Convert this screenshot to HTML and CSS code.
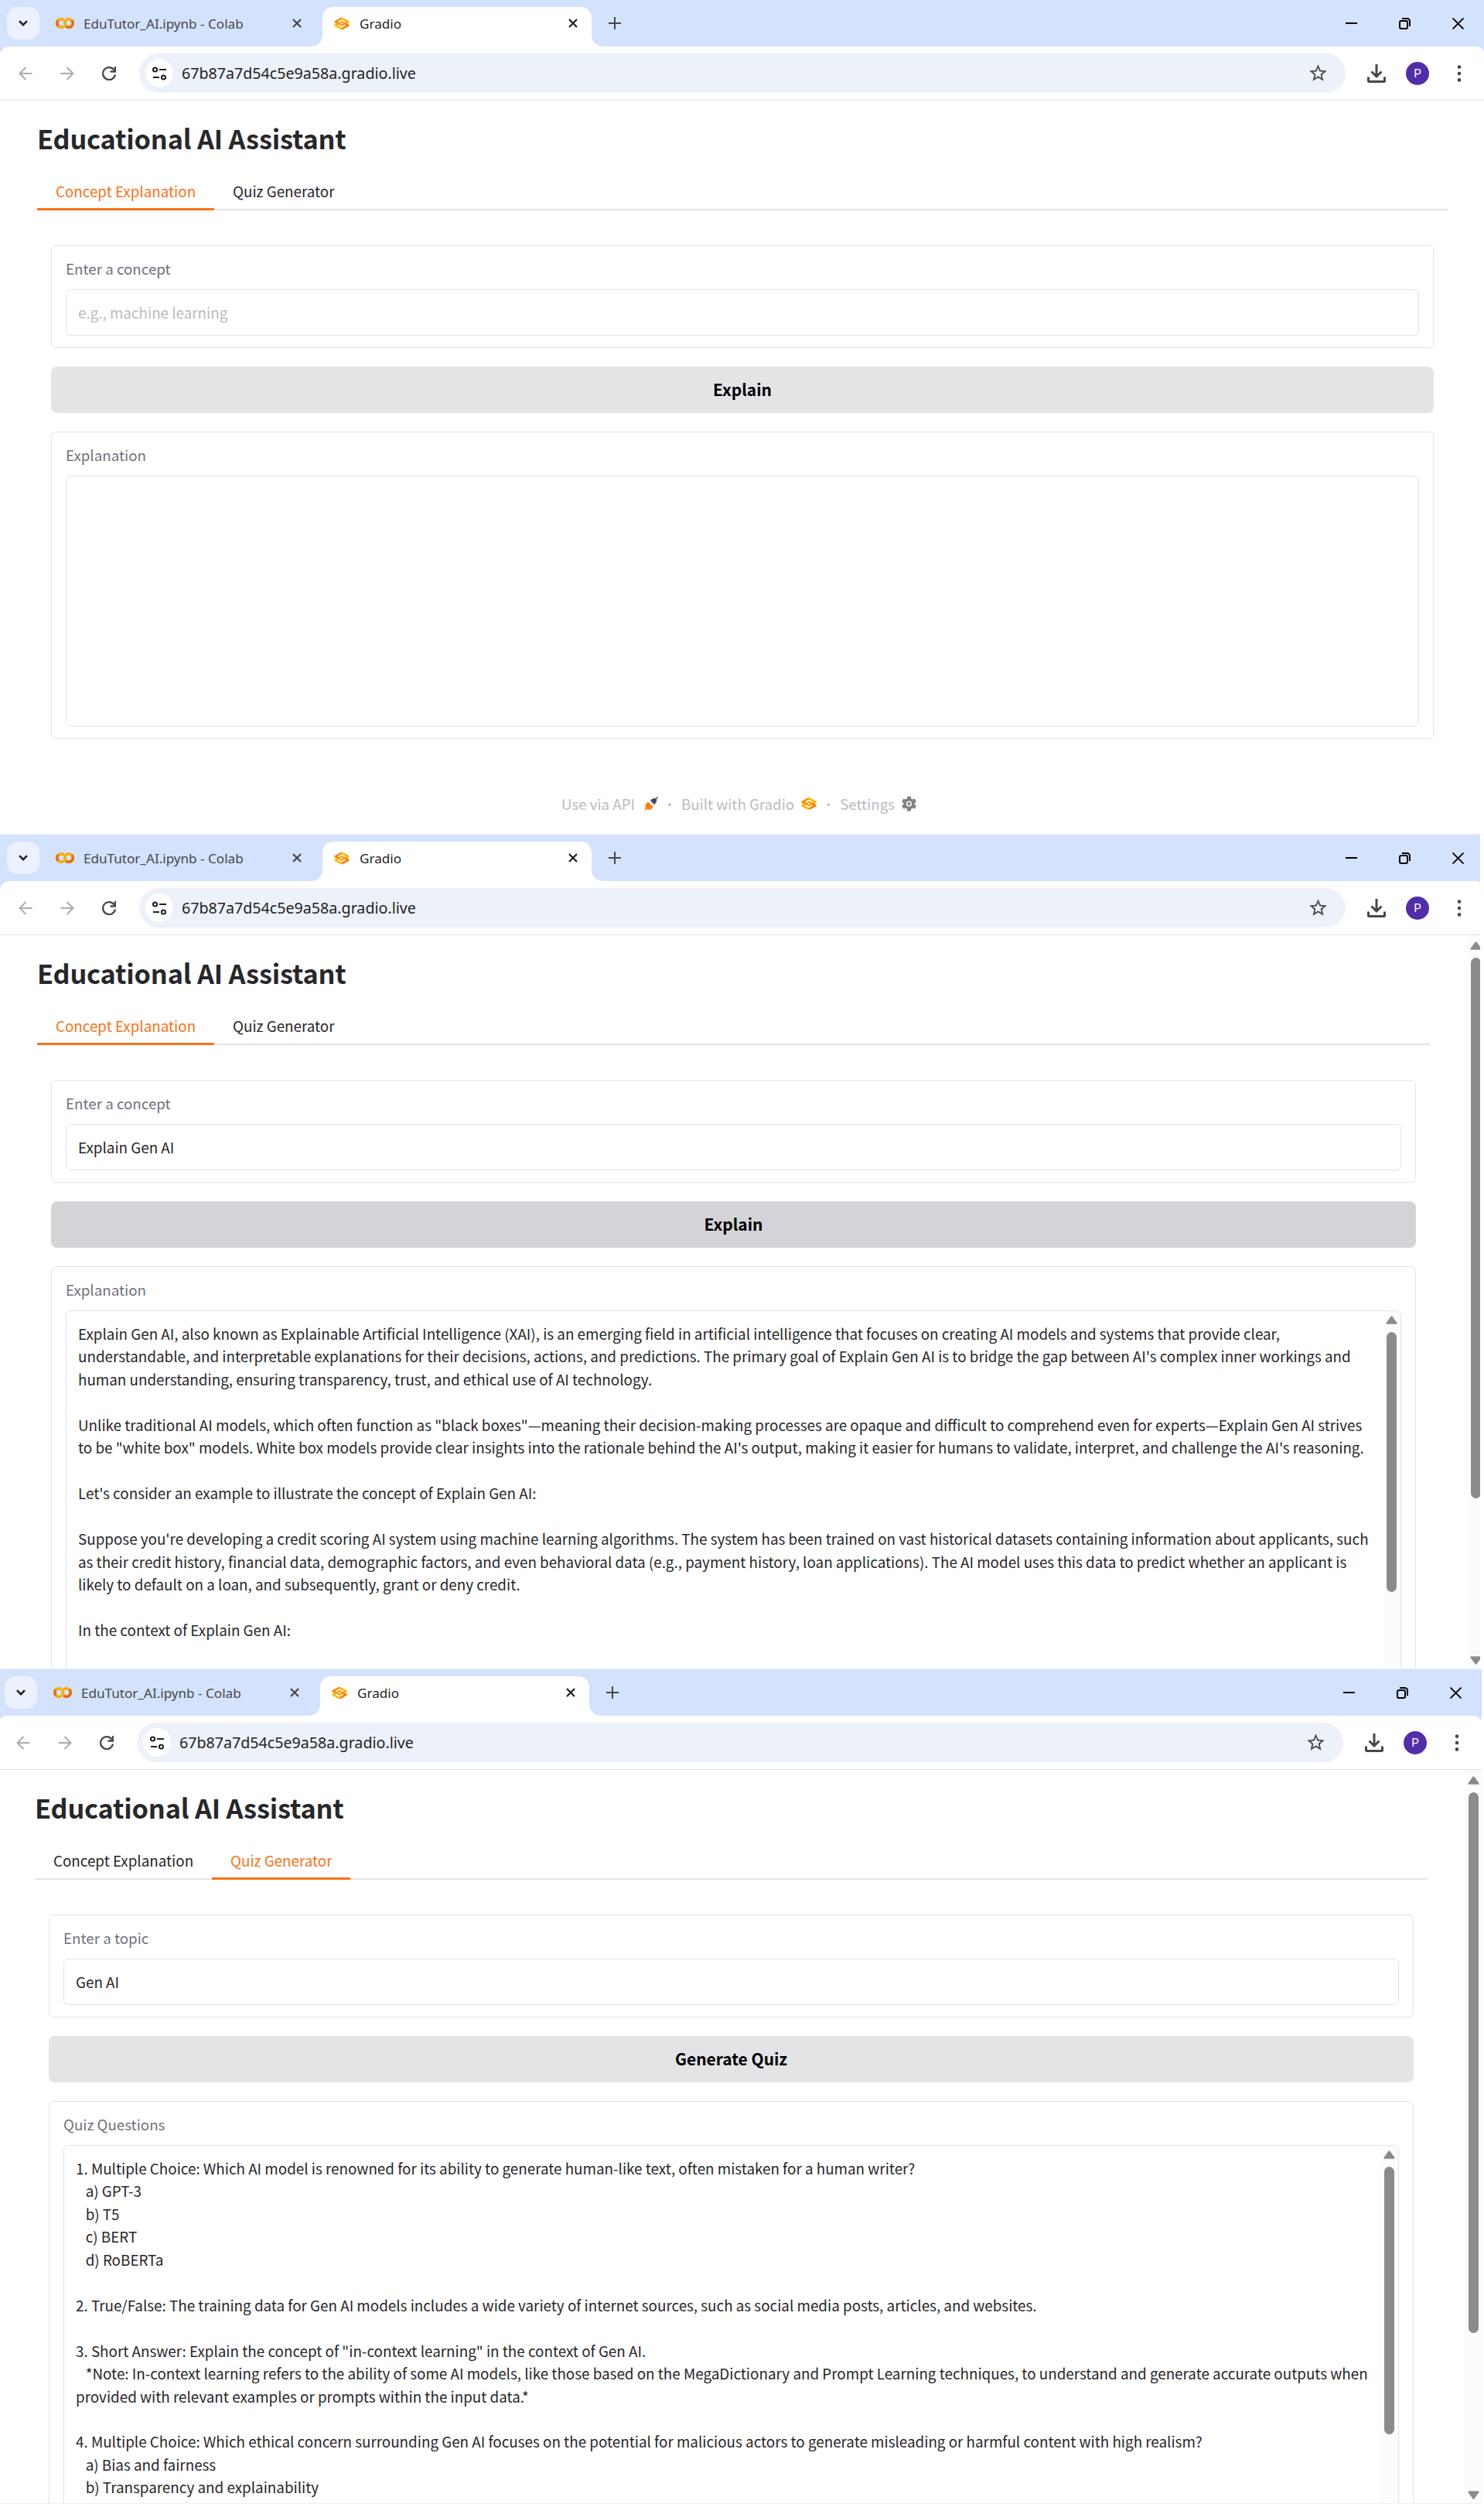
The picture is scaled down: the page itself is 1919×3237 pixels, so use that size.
FILE: index.html
```html
<!DOCTYPE html>
<html lang="en">
<head>
<meta charset="utf-8">
<title>Educational AI Assistant</title>
<link rel="stylesheet" href="styles.css">
</head>
<body>
<svg class="sprite" aria-hidden="true">
  <symbol id="chevron" viewBox="0 0 12 8"><path d="M1 1.2l5 5 5-5" fill="none" stroke="#1f1f1f" stroke-width="2.4"/></symbol>
  <symbol id="colab" viewBox="0 0 24 14">
    <path d="M10.6 3.300A5.200 5.200 0 1 0 10.6 10.700" fill="none" stroke="#f9ab00" stroke-width="3.600"/>
    <path d="M3.400 3.300A5.200 5.200 0 0 0 3.400 10.700" fill="none" stroke="#e8710a" stroke-width="3.600"/>
    <circle cx="17" cy="7" r="5.200" fill="none" stroke="#f9ab00" stroke-width="3.600"/>
    <path d="M20.700 3.300A5.200 5.200 0 0 1 13.300 10.700" fill="none" stroke="#e8710a" stroke-width="3.600"/>
  </symbol>
  <symbol id="gradio" viewBox="0 0 20 17">
    <path d="M6.500 9L1.700 6.200 10 1.600" fill="none" stroke="#ff8a00" stroke-width="2.800" stroke-linejoin="round"/>
    <path d="M10 1.600L18.300 6.200 15.500 7.700" fill="none" stroke="#ffb800" stroke-width="2.800" stroke-linejoin="round"/>
    <path d="M13.500 8L18.300 10.800 10 15.400" fill="none" stroke="#ff7c00" stroke-width="2.800" stroke-linejoin="round"/>
    <path d="M10 15.400L1.700 10.800 4.500 9.300" fill="none" stroke="#ffb800" stroke-width="2.800" stroke-linejoin="round"/>
    <path d="M10 6.100L13.700 8.500 10 10.900 6.300 8.500z" fill="none" stroke="#ff9d00" stroke-width="2.200" stroke-linejoin="round"/>
  </symbol>
  <symbol id="cross" viewBox="0 0 12 12"><path d="M1 1l10 10M11 1L1 11" fill="none" stroke="currentColor" stroke-width="2.2"/></symbol>
  <symbol id="plus" viewBox="0 0 16 16"><path d="M8 0v16M0 8h16" fill="none" stroke="#474747" stroke-width="2"/></symbol>
  <symbol id="minimize" viewBox="0 0 15 15"><path d="M0 7h15" stroke="#000" stroke-width="2"/></symbol>
  <symbol id="restore" viewBox="0 0 15 15"><rect x="1" y="4" width="10" height="10" rx="2" fill="none" stroke="#000" stroke-width="2"/><path d="M4 1h6.500A3.500 3.500 0 0 1 14 4.500V11" fill="none" stroke="#000" stroke-width="2"/></symbol>
  <symbol id="close" viewBox="0 0 15 15"><path d="M.5.5l14 14M14.500.5l-14 14" fill="none" stroke="#000" stroke-width="1.800"/></symbol>
  <symbol id="back" viewBox="0 0 18 18"><path d="M17.500 9H2M9.500 1L1.500 9l8 8" fill="none" stroke="#ababab" stroke-width="2"/></symbol>
  <symbol id="forward" viewBox="0 0 18 18"><path d="M.5 9H16M8.500 1l8 8-8 8" fill="none" stroke="#ababab" stroke-width="2"/></symbol>
  <symbol id="reload" viewBox="0 0 18 18"><path d="M15.800 4.700A8 8 0 1 0 17 10.500M17 0v6.500h-6.500" fill="none" stroke="#474747" stroke-width="2.300"/></symbol>
  <symbol id="tune" viewBox="0 0 18 18"><g fill="none" stroke="#1f1f1f" stroke-width="2"><circle cx="3.500" cy="4" r="2.600"/><path d="M9 4h9"/><circle cx="14.500" cy="14" r="2.600"/><path d="M1 14h8"/></g></symbol>
  <symbol id="star" viewBox="0 0 24 24"><path fill="#474747" d="M22 9.240l-7.190-.62L12 2 9.190 8.630 2 9.240l5.460 4.730L5.820 21 12 17.270 18.180 21l-1.630-7.030L22 9.240zM12 15.400l-3.760 2.270 1-4.280-3.320-2.880 4.380-.38L12 6.100l1.710 4.040 4.380.38-3.320 2.880 1 4.280L12 15.400z"/></symbol>
  <symbol id="download" viewBox="0 0 24 24"><path d="M12 0v15M5.500 9.500L12 16l6.500-6.500" fill="none" stroke="#474747" stroke-width="3"/><path d="M1.500 16.500v5.200q0 .8.800.8h19.400q.8 0 .8-.8v-5.200" fill="none" stroke="#474747" stroke-width="3"/></symbol>
  <symbol id="dots" viewBox="0 0 6 22"><g fill="#474747"><circle cx="3" cy="2.600" r="2.300"/><circle cx="3" cy="11" r="2.300"/><circle cx="3" cy="19.400" r="2.300"/></g></symbol>
  <symbol id="arrow-up" viewBox="0 0 15 11"><path d="M7.500 1.300l6 8.400H1.500z" fill="#8b8b8b" stroke="#8b8b8b" stroke-width="2.200" stroke-linejoin="round"/></symbol>
  <symbol id="arrow-down" viewBox="0 0 15 11"><path d="M7.500 9.700l6-8.400H1.500z" fill="#8b8b8b" stroke="#8b8b8b" stroke-width="2.200" stroke-linejoin="round"/></symbol>
  <symbol id="plug" viewBox="0 0 18 18">
    <path d="M.8 17.200l2.500-2.500" stroke="#ff7c00" stroke-width="1.800"/>
    <path d="M3 8.200l2.200-1.400.7 1.500 1.800-1.300-.3 2.500 1.900 1.800 2.300-.4-1.200 1.900 1.100.7-2 2.200q-3.500 2.200-6.500-.2Q.3 12 3 8.200z" fill="#ff7c00"/>
    <path d="M8.300 4.300l2.600-1.900q2.600-1.600 4.400.2 1.700 1.800.3 4.300l-2.100 2.900q-.5.500-1 0L8.300 5.300q-.5-.5 0-1z" fill="#3f4a63"/>
    <path d="M14.800 3.200L17.600.4" stroke="#3f4a63" stroke-width="1.500"/>
  </symbol>
  <symbol id="gear" viewBox="0 0 24 24"><path fill="#808080" fill-rule="evenodd" d="M19.800 12.900c.1-.3.1-.6.100-.9s0-.6-.1-.9l2.700-2c.3-.2.300-.5.200-.8l-2.500-4.300c-.2-.3-.5-.4-.8-.3l-3 1.200c-.6-.4-1.200-.8-1.900-1.100L14 .6c0-.3-.3-.6-.6-.6h-4.800c-.3 0-.6.3-.6.6l-.5 3.200c-.7.3-1.300.7-1.900 1.100l-3-1.200c-.3-.1-.6 0-.8.3L-.7 8.300c-.1.300-.1.600.2.800l2.700 2c-.1.300-.1.600-.1.900s0 .6.1.9l-2.700 2c-.3.200-.3.500-.2.800l2.500 4.300c.2.300.5.400.8.300l3-1.200c.6.400 1.200.8 1.900 1.100l.5 3.200c0 .3.300.6.600.6h4.800c.3 0 .6-.3.600-.6l.5-3.200c.7-.3 1.300-.7 1.900-1.100l3 1.200c.3.100.6 0 .8-.3l2.500-4.300c.1-.3.100-.6-.2-.8zM11 7.500a4.500 4.500 0 1 1 0 9 4.500 4.500 0 0 1 0-9zm0 1.900a2.600 2.600 0 1 0 0 5.200 2.600 2.600 0 0 0 0-5.200z" transform="translate(1)"/></symbol>
</svg>

<section class="window">
  <div class="frame">
    <header class="tabstrip">
      <button class="tab-search"><svg class="i-chevron"><use href="#chevron"/></svg></button>
      <div class="btab"><svg class="i-colab"><use href="#colab"/></svg><span class="btab-title">EduTutor_AI.ipynb - Colab</span><svg class="i-cross"><use href="#cross"/></svg></div>
      <div class="btab btab-active"><svg class="i-gradio"><use href="#gradio"/></svg><span class="btab-title">Gradio</span><svg class="i-cross"><use href="#cross"/></svg></div>
      <svg class="i-plus"><use href="#plus"/></svg>
      <div class="controls"><span><svg><use href="#minimize"/></svg></span><span><svg><use href="#restore"/></svg></span><span><svg><use href="#close"/></svg></span></div>
    </header>
    <div class="toolbar-bg"><div class="toolbar">
      <span class="nav-btn"><svg><use href="#back"/></svg></span><span class="nav-btn"><svg><use href="#forward"/></svg></span><span class="nav-btn"><svg><use href="#reload"/></svg></span>
      <div class="omnibox"><span class="site"><svg><use href="#tune"/></svg></span><span class="url">67b87a7d54c5e9a58a.gradio.live</span><svg class="i-star"><use href="#star"/></svg></div>
      <svg class="i-download"><use href="#download"/></svg><span class="avatar">P</span><svg class="i-dots"><use href="#dots"/></svg>
    </div></div>
    <div class="viewport">
      <main class="app">
        <h1>Educational AI Assistant</h1>
        <nav class="tabs"><a class="tab tab-on">Concept Explanation</a><a class="tab">Quiz Generator</a></nav>
        <div class="panel">
          <div class="card"><label>Enter a concept</label><div class="field placeholder">e.g., machine learning</div></div>
          <button class="action">Explain</button>
          <div class="card"><label>Explanation</label><div class="output"></div></div>
        </div>
        <footer class="footer">
          <span>Use via API</span><svg class="f-plug"><use href="#plug"/></svg><span class="sep">·</span><span>Built with Gradio</span><svg class="f-gradio"><use href="#gradio"/></svg><span class="sep">·</span><span>Settings</span><svg class="f-gear"><use href="#gear"/></svg>
        </footer>
      </main>
    </div>
  </div>
</section>

<section class="window window-narrow">
  <div class="frame">
    <header class="tabstrip">
      <button class="tab-search"><svg class="i-chevron"><use href="#chevron"/></svg></button>
      <div class="btab"><svg class="i-colab"><use href="#colab"/></svg><span class="btab-title">EduTutor_AI.ipynb - Colab</span><svg class="i-cross"><use href="#cross"/></svg></div>
      <div class="btab btab-active"><svg class="i-gradio"><use href="#gradio"/></svg><span class="btab-title">Gradio</span><svg class="i-cross"><use href="#cross"/></svg></div>
      <svg class="i-plus"><use href="#plus"/></svg>
      <div class="controls"><span><svg><use href="#minimize"/></svg></span><span><svg><use href="#restore"/></svg></span><span><svg><use href="#close"/></svg></span></div>
    </header>
    <div class="toolbar-bg"><div class="toolbar">
      <span class="nav-btn"><svg><use href="#back"/></svg></span><span class="nav-btn"><svg><use href="#forward"/></svg></span><span class="nav-btn"><svg><use href="#reload"/></svg></span>
      <div class="omnibox"><span class="site"><svg><use href="#tune"/></svg></span><span class="url">67b87a7d54c5e9a58a.gradio.live</span><svg class="i-star"><use href="#star"/></svg></div>
      <svg class="i-download"><use href="#download"/></svg><span class="avatar">P</span><svg class="i-dots"><use href="#dots"/></svg>
    </div></div>
    <div class="viewport">
      <main class="app">
        <h1>Educational AI Assistant</h1>
        <nav class="tabs"><a class="tab tab-on">Concept Explanation</a><a class="tab">Quiz Generator</a></nav>
        <div class="panel">
          <div class="card"><label>Enter a concept</label><div class="field">Explain Gen AI</div></div>
          <button class="action action-hover">Explain</button>
          <div class="card"><label>Explanation</label><div class="output output-tall"><div class="text">Explain Gen AI, also known as Explainable Artificial Intelligence (XAI), is an emerging field in artificial intelligence that focuses on creating AI models and systems that provide clear,
understandable, and interpretable explanations for their decisions, actions, and predictions. The primary goal of Explain Gen AI is to bridge the gap between AI's complex inner workings and
human understanding, ensuring transparency, trust, and ethical use of AI technology.

Unlike traditional AI models, which often function as "black boxes"—meaning their decision-making processes are opaque and difficult to comprehend even for experts—Explain Gen AI strives
to be "white box" models. White box models provide clear insights into the rationale behind the AI's output, making it easier for humans to validate, interpret, and challenge the AI's reasoning.

Let's consider an example to illustrate the concept of Explain Gen AI:

Suppose you're developing a credit scoring AI system using machine learning algorithms. The system has been trained on vast historical datasets containing information about applicants, such
as their credit history, financial data, demographic factors, and even behavioral data (e.g., payment history, loan applications). The AI model uses this data to predict whether an applicant is
likely to default on a loan, and subsequently, grant or deny credit.

In the context of Explain Gen AI:</div>
            <div class="scroll scroll-inner"><svg><use href="#arrow-up"/></svg><i class="thumb thumb-text"></i></div></div></div>
        </div>
      </main>
      <div class="scroll scroll-page"><svg><use href="#arrow-up"/></svg><i class="thumb thumb-page"></i><svg class="down"><use href="#arrow-down"/></svg></div>
    </div>
  </div>
</section>

<section class="window window-shifted">
  <div class="frame">
    <header class="tabstrip">
      <button class="tab-search"><svg class="i-chevron"><use href="#chevron"/></svg></button>
      <div class="btab"><svg class="i-colab"><use href="#colab"/></svg><span class="btab-title">EduTutor_AI.ipynb - Colab</span><svg class="i-cross"><use href="#cross"/></svg></div>
      <div class="btab btab-active"><svg class="i-gradio"><use href="#gradio"/></svg><span class="btab-title">Gradio</span><svg class="i-cross"><use href="#cross"/></svg></div>
      <svg class="i-plus"><use href="#plus"/></svg>
      <div class="controls"><span><svg><use href="#minimize"/></svg></span><span><svg><use href="#restore"/></svg></span><span><svg><use href="#close"/></svg></span></div>
    </header>
    <div class="toolbar-bg"><div class="toolbar">
      <span class="nav-btn"><svg><use href="#back"/></svg></span><span class="nav-btn"><svg><use href="#forward"/></svg></span><span class="nav-btn"><svg><use href="#reload"/></svg></span>
      <div class="omnibox"><span class="site"><svg><use href="#tune"/></svg></span><span class="url">67b87a7d54c5e9a58a.gradio.live</span><svg class="i-star"><use href="#star"/></svg></div>
      <svg class="i-download"><use href="#download"/></svg><span class="avatar">P</span><svg class="i-dots"><use href="#dots"/></svg>
    </div></div>
    <div class="viewport">
      <main class="app">
        <h1>Educational AI Assistant</h1>
        <nav class="tabs"><a class="tab">Concept Explanation</a><a class="tab tab-on">Quiz Generator</a></nav>
        <div class="panel">
          <div class="card"><label>Enter a topic</label><div class="field">Gen AI</div></div>
          <button class="action">Generate Quiz</button>
          <div class="card"><label>Quiz Questions</label><div class="output output-tall"><div class="text">1. Multiple Choice: Which AI model is renowned for its ability to generate human-like text, often mistaken for a human writer?
   a) GPT-3
   b) T5
   c) BERT
   d) RoBERTa

2. True/False: The training data for Gen AI models includes a wide variety of internet sources, such as social media posts, articles, and websites.

3. Short Answer: Explain the concept of "in-context learning" in the context of Gen AI.
   *Note: In-context learning refers to the ability of some AI models, like those based on the MegaDictionary and Prompt Learning techniques, to understand and generate accurate outputs when
provided with relevant examples or prompts within the input data.*

4. Multiple Choice: Which ethical concern surrounding Gen AI focuses on the potential for malicious actors to generate misleading or harmful content with high realism?
   a) Bias and fairness
   b) Transparency and explainability</div>
            <div class="scroll scroll-inner"><svg><use href="#arrow-up"/></svg><i class="thumb thumb-quiz"></i></div></div></div>
        </div>
      </main>
      <div class="scroll scroll-page"><svg><use href="#arrow-up"/></svg><i class="thumb thumb-page"></i><svg class="down"><use href="#arrow-down"/></svg></div>
    </div>
  </div>
</section>
</body>
</html>
```
FILE: styles.css
```css
* { box-sizing: border-box; }
body {
  margin: 0;
  background: #fff;
  color: #27272a;
  font-family: "Noto Sans CJK SC", "Open Sans", sans-serif;
  font-size: 18.82px;
  overflow-x: hidden;
}
svg { display: block; flex: none; overflow: visible; }
button { border: 0; padding: 0; margin: 0; font: inherit; }
.sprite { width: 0; height: 0; position: absolute; }

/* Browser windows, stacked */
.window { width: 1919px; height: 1079px; overflow: hidden; border-bottom: 1px solid #eff0f4; }
.window-narrow { width: 1914px; }
.window-shifted { width: 1916px; }
.window-shifted .frame { margin-left: -3px; }
.frame { width: 1920px; height: 1078px; display: flex; flex-direction: column; }

/* Tab strip */
.tabstrip { height: 60px; flex: none; display: flex; align-items: center; background: #d3e2fd; padding-left: 9px; font: 17.1px "Noto Sans", "Open Sans", sans-serif; }
.tab-search { width: 42px; height: 42px; border-radius: 14px; background: #ebf1fe; display: grid; place-items: center; }
.i-chevron { width: 12px; height: 8px; }
.btab { width: 354px; height: 51px; margin-top: 9px; padding: 0 9px 9px 21px; display: flex; align-items: center; color: #474747; }
.btab-title { margin-left: 12px; flex: 1; line-height: 24px; padding-top: 2px; }
.i-colab { width: 24px; height: 14px; }
.i-cross { width: 12px; height: 12px; margin-right: 6px; }
.btab-active { position: relative; width: 348px; margin-left: 12px; padding: 0 12px 9px 15px; background: #fff; border-radius: 14px 14px 0 0; color: #1f1f1f; }
.btab-active .btab-title { margin-left: 13px; }
.btab-active::before, .btab-active::after { content: ""; position: absolute; bottom: 0; width: 14px; height: 14px; }
.btab-active::before { left: -14px; background: radial-gradient(circle at 0 0, transparent 13.5px, #fff 14px); }
.btab-active::after { right: -14px; background: radial-gradient(circle at 100% 0, transparent 13.5px, #fff 14px); }
.i-gradio { width: 20px; height: 17px; }
.i-plus { width: 16px; height: 16px; margin-left: 22px; }
.controls { margin-left: auto; display: flex; }
.controls span { width: 69px; display: grid; place-items: center; }
.controls svg { width: 15px; height: 15px; }

/* Toolbar */
.toolbar-bg { flex: none; background: #d3e2fd; }
.toolbar { height: 70px; background: #fff; border-bottom: 1px solid #dfe0e3; border-radius: 12px 12px 0 0; padding-left: 6px; display: flex; align-items: center; }
.nav-btn { width: 54px; display: grid; place-items: center; }
.nav-btn svg { width: 18px; height: 18px; }
.omnibox { width: 1560px; height: 51px; margin-left: 12px; border-radius: 26px; background: #ecf1fa; display: flex; align-items: center; padding: 0 22px 0 8px; }
.site { width: 36px; height: 37px; border-radius: 50%; background: #fff; display: grid; place-items: center; }
.site svg { width: 18px; height: 18px; }
.url { margin-left: 11px; flex: 1; color: #1f1f1f; font: 19.65px/28px "Noto Sans", "Open Sans", sans-serif; }
.i-star { width: 27px; height: 27px; }
.i-download { width: 24px; height: 24px; margin-left: 28px; }
.avatar { width: 30px; height: 30px; margin-left: 26px; border-radius: 50%; background: #522da8; color: #fff; font: 15px/31px Roboto, sans-serif; text-align: center; }
.i-dots { width: 6px; height: 22px; margin-left: 36px; }

/* Page */
.viewport { flex: 1; min-height: 0; display: flex; overflow: hidden; }
.app { flex: 1; padding: 23px 48px 0; min-width: 0; }
h1 { margin: 0 0 21px; font-size: 34.3px; line-height: 50px; font-weight: 700; letter-spacing: -0.17px; }
.tabs { height: 48px; display: flex; background: linear-gradient(#e4e4e7, #e4e4e7) bottom / 100% 2px no-repeat; font-size: 18.8px; line-height: 46px; color: #27272a; }
.tab { padding: 0 24px; height: 48px; }
.tab-on { color: #f97316; border-bottom: 3px solid #f97316; }
.panel { padding: 45px 18px 0; display: flex; flex-direction: column; gap: 24px; }
.card { border: 1px solid #e4e4e7; border-radius: 6px; padding: 15px 18px; flex: none; }
.card label { display: block; line-height: 28px; margin-bottom: 13px; font-size: 18.75px; color: #71717a; }
.field { height: 60px; line-height: 57px; border: 1px solid #e4e4e7; border-radius: 6px; padding: 0 15px; }
.placeholder { color: #bbbbc2; }
.action { height: 60px; flex: none; border-radius: 8px; background: #e4e4e7; color: #000; font-size: 20.95px; font-weight: 700; line-height: 58px; padding-bottom: 2px; }
.action-hover { background: #d4d4d8; }
.output { height: 324px; border: 1px solid #e4e4e7; border-radius: 6px; display: flex; overflow: hidden; }
.output-tall { height: 600px; }
.text { flex: 1; padding: 14px 0 0 15px; white-space: pre; line-height: 29.45px; }

/* Scrollbars */
.scroll { width: 23px; flex: none; background: #fcfcfc; display: flex; flex-direction: column; align-items: center; }
.scroll svg { width: 15px; height: 11px; }
.scroll-inner { padding-top: 6px; }
.scroll-page { padding: 8px 0 5px; }
.thumb { width: 13px; flex: none; margin-top: 10px; border-radius: 7px; background: #8b8b8b; }
.thumb-page { height: 699px; }
.thumb-text { height: 336px; }
.thumb-quiz { height: 346px; }
.down { margin-top: auto; }

/* Footer */
.footer { display: flex; align-items: center; height: 28px; margin: 70px 0 0 678px; color: #bbbbc2; font-size: 18.7px; line-height: 28px; }
.f-plug { width: 18px; height: 18px; margin-left: 12px; }
.f-gradio { width: 20px; height: 18px; margin-left: 9px; }
.f-gear { width: 19px; height: 20px; margin-left: 9px; }
.sep { width: 30px; text-align: center; font-weight: 300; }
```
